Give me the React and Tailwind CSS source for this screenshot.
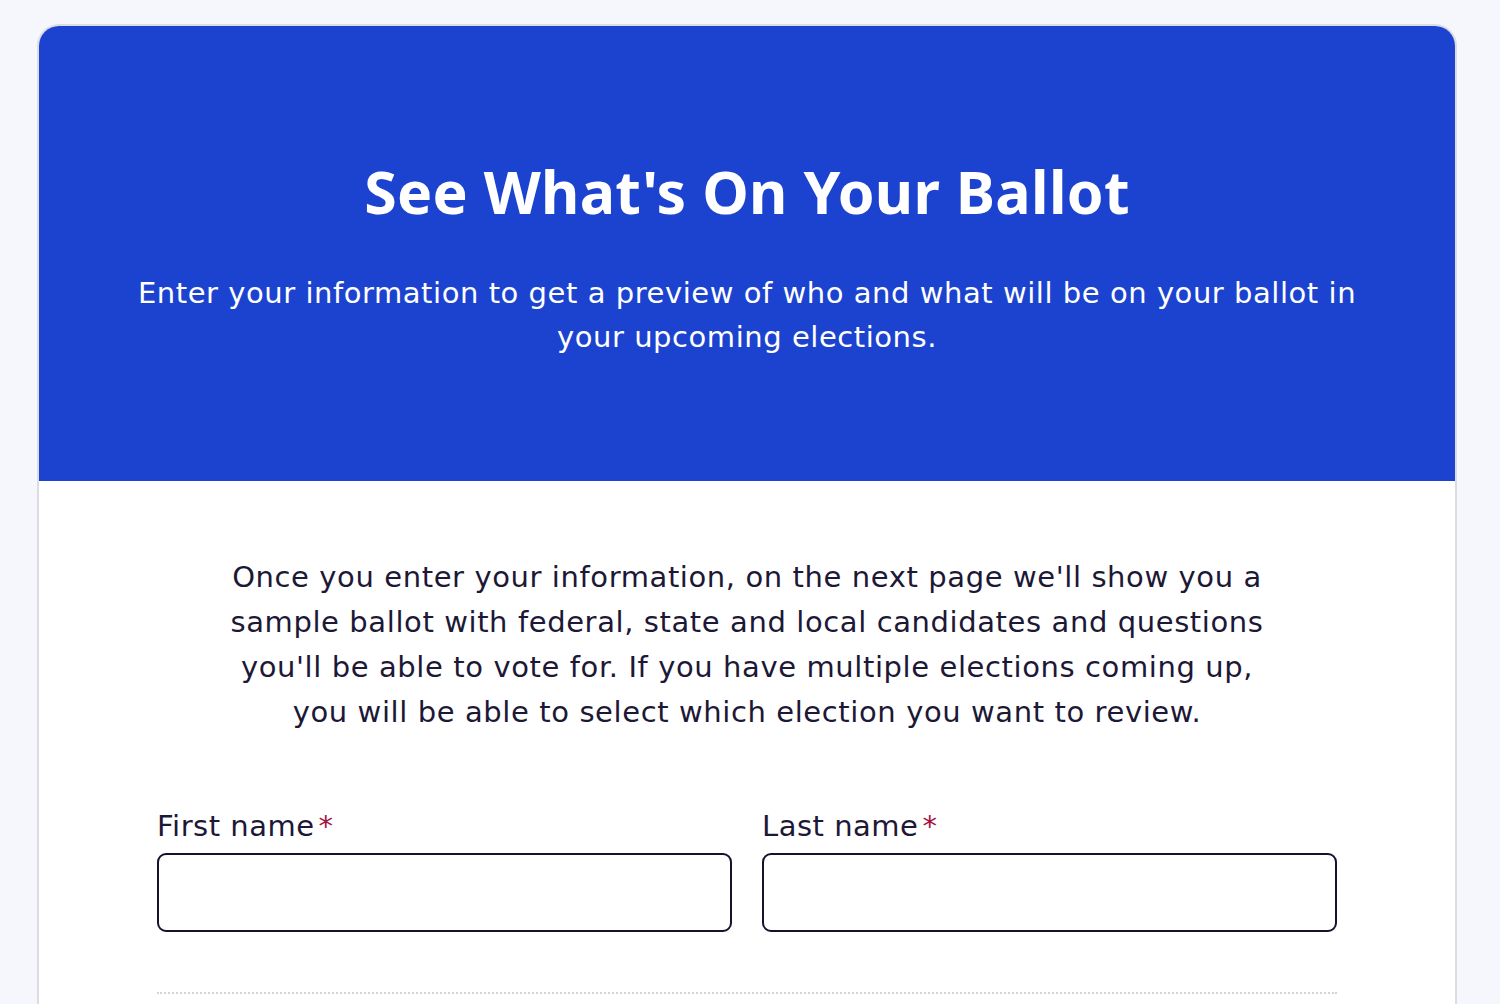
import React from "react";

function Field({ label }) {
  return (
    <div className="flex flex-col">
      <label className="text-[29px] leading-[40px] text-[#1c1836] tracking-[0.5px]">
        {label}
        <span className="text-[#a3123f] ml-1">*</span>
      </label>
      <input
        type="text"
        className="mt-[7px] h-[79px] rounded-[9px] border-2 border-[#17112e] bg-white px-4 outline-none"
      />
    </div>
  );
}

export default function App() {
  return (
    <div
      className="min-h-screen bg-[#f6f7fd] pl-[37px] pt-[24px]"
      style={{ fontFamily: "'DejaVu Sans', 'Noto Sans', sans-serif" }}
    >
      <div className="w-[1420px] overflow-hidden rounded-t-[22px] border-2 border-b-0 border-[#dcdde3] bg-white">
        <div className="flex h-[455px] flex-col items-center bg-[#1c43d0] px-16 pt-[125px] text-center text-white">
          <h1
            className="text-[59px] font-bold leading-[80px] tracking-[0.3px]"
            style={{ fontFamily: "'Noto Sans', 'DejaVu Sans', sans-serif" }}
          >
            See What's On Your Ballot
          </h1>
          <p className="mt-[40px] max-w-[1240px] text-[29px] leading-[44px] tracking-[0.55px]">
            Enter your information to get a preview of who and what will be on your ballot in your upcoming elections.
          </p>
        </div>
        <div className="px-[118px] pt-[74px] pb-[10px]">
          <p className="mx-auto max-w-[1060px] text-center text-[29px] leading-[45px] text-[#1c1836] tracking-[0.6px]">
            Once you enter your information, on the next page we'll show you a sample ballot with federal, state and local candidates and questions you'll be able to vote for. If you have multiple elections coming up, you will be able to select which election you want to review.
          </p>
          <div className="mt-[71px] grid grid-cols-2 gap-[30px]">
            <Field label="First name" />
            <Field label="Last name" />
          </div>
          <div className="mt-[60px] border-t-2 border-dotted border-[#d4d4d8]" />
        </div>
      </div>
    </div>
  );
}
